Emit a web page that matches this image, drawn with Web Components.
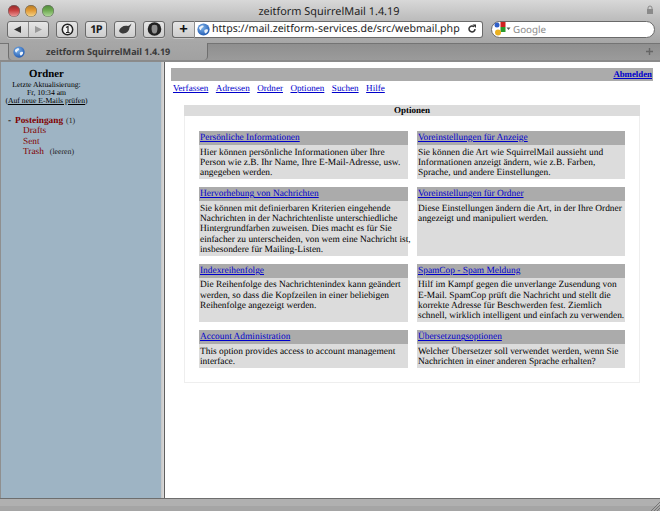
<!DOCTYPE html>
<html lang="de"><head><meta charset="utf-8"><title>zeitform SquirrelMail 1.4.19</title>
<style>
html,body{margin:0;height:100%;overflow:hidden}
body{background:#fff;font-family:"Liberation Serif",serif;text-rendering:geometricPrecision}
</style></head><body>
<browser-window>
  <browser-titlebar slot="chrome"></browser-titlebar>
  <browser-toolbar slot="chrome"></browser-toolbar>
  <browser-tabs slot="chrome"></browser-tabs>
  <folder-pane slot="left"></folder-pane>
  <main-pane slot="right">
    <option-card title-text="Persönliche Informationen">Hier können persönliche Informationen über Ihre<br>Person wie z.B. Ihr Name, Ihre E-Mail-Adresse, usw.<br>angegeben werden.</option-card>
    <option-card title-text="Voreinstellungen für Anzeige">Sie können die Art wie SquirrelMail aussieht und<br>Informationen anzeigt ändern, wie z.B. Farben,<br>Sprache, und andere Einstellungen.</option-card>
    <option-card title-text="Hervorhebung von Nachrichten">Sie können mit definierbaren Kriterien eingehende<br>Nachrichten in der Nachrichtenliste unterschiedliche<br>Hintergrundfarben zuweisen. Dies macht es für Sie<br>einfacher zu unterscheiden, von wem eine Nachricht ist,<br>insbesondere für Mailing-Listen.</option-card>
    <option-card title-text="Voreinstellungen für Ordner">Diese Einstellungen ändern die Art, in der Ihre Ordner<br>angezeigt und manipuliert werden.</option-card>
    <option-card title-text="Indexreihenfolge">Die Reihenfolge des Nachrichtenindex kann geändert<br>werden, so dass die Kopfzeilen in einer beliebigen<br>Reihenfolge angezeigt werden.</option-card>
    <option-card title-text="SpamCop - Spam Meldung">Hilf im Kampf gegen die unverlange Zusendung von<br>E-Mail. SpamCop prüft die Nachricht und stellt die<br>korrekte Adresse für Beschwerden fest. Ziemlich<br>schnell, wirklich intelligent und einfach zu verwenden.</option-card>
    <option-card title-text="Account Administration">This option provides access to account management<br>interface.</option-card>
    <option-card title-text="Übersetzungsoptionen">Welcher Übersetzer soll verwendet werden, wenn Sie<br>Nachrichten in einer anderen Sprache erhalten?</option-card>
  </main-pane>
</browser-window>
<script>
function def(name, html){
  customElements.define(name, class extends HTMLElement{
    connectedCallback(){
      if(this.shadowRoot) return;
      const r=this.attachShadow({mode:'open'});
      r.innerHTML = typeof html==='function' ? html(this) : html;
    }
  });
}
const GLOBE=(s,id)=>`<svg width="${s}" height="${s}" viewBox="0 0 16 16"><defs><radialGradient id="${id}" cx=".4" cy=".35" r=".75"><stop offset="0" stop-color="#7fb4ea"/><stop offset="1" stop-color="#1650ac"/></radialGradient></defs><circle cx="8" cy="8" r="7.500" fill="url(#${id})"/><path d="M3 5c2-2 4-2.500 5-1.500s-1 2-2 3-1 3-2 2-2-2-1-3.500zM10.500 8c2-1 3 0 3 1s-1 3-3 4c-1-1-1.500-2-1.500-3s.5-2 1.500-2z" fill="#eef4fb"/></svg>`;

def('browser-window',`<style>
:host{display:flex;flex-direction:column;width:660px;height:511px;overflow:hidden;font-family:"Liberation Serif",serif}
.split{flex:1;min-height:0;display:flex;border-top:1px solid #8b8b8b}
.left{width:161px;flex:none;background:#9eb4c4;border-left:1px solid #8f8f8f;box-sizing:border-box}
.div{width:4px;flex:none;background:linear-gradient(90deg,#c4c4c4,#dadada 75%,#5f5f5f 75%,#5f5f5f)}
.right{flex:1;min-width:0;background:#fff}
.status{height:13px;flex:none;border-top:1px solid #6e6e6e;box-sizing:border-box;background:linear-gradient(#b0b0b0 0 55%,#a5a5a5 55%);display:flex;justify-content:flex-end;align-items:flex-end}
svg{display:block}
</style>
<slot name="chrome"></slot>
<div class="split"><div class="left"><slot name="left"></slot></div><div class="div"></div><div class="right"><slot name="right"></slot></div></div>
<div class="status"><svg width="10" height="10" viewBox="0 0 10 10"><path d="M1 10L10 1M4 10L10 4M7 10L10 7" stroke="#666" stroke-width=".8"/></svg></div>`);

def('browser-titlebar',`<style>
:host{display:flex;align-items:center;height:20px;padding:0 7px 0 8px;box-sizing:border-box;background:linear-gradient(#d8d8d8,#bcbcbc);color:#222}
.lights{display:flex;gap:5px;padding-top:2px}
.l{width:12px;height:12px;border-radius:50%;box-sizing:border-box;box-shadow:inset 0 0 0 .5px #666}
.r{background:linear-gradient(#8f2b2b,#c83f3f 45%,#eea0a0)}
.y{background:linear-gradient(#b27a25,#e29a35 45%,#f5d890)}
.g{background:linear-gradient(#4f8a3b,#6fab52 45%,#b5dca0)}
.t{flex:1;text-align:center;margin-left:-42px;font:10.900px "Noto Sans",sans-serif;color:#1e1e1e;padding-top:2px}
svg{display:block;margin-right:-1px}
</style>
<div class="lights"><div class="l r"></div><div class="l y"></div><div class="l g"></div></div>
<div class="t">zeitform SquirrelMail 1.4.19</div>
<svg width="8" height="10" viewBox="0 0 8 10"><path d="M2 4V3a2 2 0 0 1 4 0v1" fill="none" stroke="#8a8a8a"/><rect x="1" y="4" width="6" height="5" fill="#8a8a8a"/></svg>`);

def('tool-btn',`<style>
:host{display:flex;align-items:center;justify-content:center;height:17px;box-sizing:border-box;border:1px solid #6a6a6a;border-radius:3px;background:linear-gradient(#e6e6e6,#cdcdcd);box-shadow:0 1px 0 #c6c6c6}
</style><slot></slot>`);

def('browser-toolbar',`<style>
:host{display:flex;align-items:center;height:23px;padding:0 0 5px 7px;box-sizing:border-box;background:linear-gradient(#bcbcbc,#a6a6a6);font-family:"Noto Sans",sans-serif}
svg{display:block}
tool-btn{flex:none}
.nav{width:42px;display:flex}
.nav span{flex:1;display:flex;align-items:center;justify-content:center;height:15px}
.nav span+span{border-left:1px solid #8a8a8a}
.w22{width:22px;margin-left:7px}
.plus{width:22px;margin-left:7px;border-radius:3px 0 0 3px;border-right:0;font:bold 15px "Noto Sans",sans-serif;color:#111;line-height:1}
.url{flex:none;width:289px;height:17px;box-sizing:border-box;background:#fff;border:1px solid #6a6a6a;border-left:1px solid #8f8f8f;border-radius:0 3px 3px 0;display:flex;align-items:center;padding:0 5px 0 2px;gap:2px;font-size:10.600px;color:#222;white-space:nowrap}
.url .u{flex:1}
.search{flex:none;width:164px;height:17px;margin-left:8px;box-sizing:border-box;background:#fff;border:1px solid #6a6a6a;border-radius:9px;display:flex;align-items:center;padding-left:2px;gap:1px;font-size:9.800px;color:#8a8a8a}
.txt{font:bold 11px "Noto Sans",sans-serif;color:#1a1a1a;letter-spacing:-.7px}
</style>
<tool-btn class="nav"><span><svg width="9" height="9" viewBox="0 0 9 9"><path d="M8 1v7L1 4.500z" fill="#333"/></svg></span><span><svg width="9" height="9" viewBox="0 0 9 9"><path d="M1 1v7l7-3.500z" fill="#9a9a9a"/></svg></span></tool-btn>
<tool-btn class="w22"><svg width="13" height="13" viewBox="0 0 13 13"><circle cx="6.500" cy="6.500" r="5.200" fill="#f4f4f4" stroke="#222" stroke-width="1.500"/><path d="M5 4.500l2-1v6M5 9.500h3.600" fill="none" stroke="#222" stroke-width="1.200"/></svg></tool-btn>
<tool-btn class="w22"><span class="txt">1P</span></tool-btn>
<tool-btn class="w22"><svg width="15" height="12" viewBox="0 0 15 12"><path d="M1 8C2 4 6 2 10 3c1 0 2-1 3.500-2.500-.5 2-1.500 3-2 4 0 3-3 6-6 6-1.500 0-3.500-.5-4.500-2.500z" fill="#3b3b3b"/></svg></tool-btn>
<tool-btn class="w22"><svg width="15" height="14" viewBox="0 0 15 14"><circle cx="7.500" cy="7" r="6.800" fill="#222"/><path d="M5 3.500c1.500-1 3.500-1 5 0 .6 2 .6 4 0 6-.5 1.500-1 2-2.500 2s-2-.5-2.500-2c-.6-2-.6-4 0-6z" fill="#8f8f8f"/></svg></tool-btn>
<tool-btn class="plus">+</tool-btn>
<div class="url">${GLOBE(13,'g1')}<span class="u">https://mail.zeitform-services.de/src/webmail.php</span><svg width="10" height="10" viewBox="0 0 10 10"><path d="M8 5a3 3 0 1 1-1-2.300" fill="none" stroke="#333" stroke-width="1.500"/><path d="M5.500 0.500h3.500v3.500z" fill="#333"/></svg></div>
<div class="search"><svg width="18" height="14" viewBox="0 0 18 14"><circle cx="3" cy="3" r="2.500" fill="#2f5fc8"/><rect x="6.500" y="0" width="5" height="5" fill="#d02020"/><rect x="6.500" y="5" width="5" height="5" fill="#2a9a2a"/><circle cx="4" cy="10.500" r="3" fill="#eab020"/><path d="M12.500 5.500h4l-2 2.500z" fill="#555"/></svg><span>Google</span></div>`);

def('browser-tabs',`<style>
:host{display:flex;height:18px;box-sizing:border-box;background:linear-gradient(#8e8e8e,#9b9b9b);box-shadow:inset 0 1px 0 #747474;border-bottom:1px solid #8a8a8a;align-items:stretch;font:bold 9.100px "Noto Sans",sans-serif;color:#3a3a3a}
.stub{width:8px;background:#aeaeae;box-shadow:inset 0 1px 0 #747474}
.tab{width:200px;box-sizing:border-box;background:linear-gradient(#a7a7a7,#a1a1a1);border:solid #6f6f6f;border-width:0 1px 0 1px;border-radius:0 0 4px 4px;display:flex;align-items:center;padding-left:4px;gap:21px;white-space:nowrap}
.add{margin-left:auto;padding-right:7px;display:flex;align-items:center}
svg{display:block}
</style>
<div class="stub"></div>
<div class="tab">${GLOBE(12,'g2')}<span>zeitform SquirrelMail 1.4.19</span></div>
<div class="add"><svg width="7" height="7" viewBox="0 0 7 7"><path d="M3.500 0v7M0 3.500h7" stroke="#666" stroke-width="1.400"/></svg></div>`);

def('folder-pane',`<style>
:host{display:block;color:#000;font-family:"Liberation Serif",serif;padding-top:6px}
.head{width:91px;text-align:center;font-size:7.700px;line-height:8px}
.head b{display:block;font-size:10.800px;line-height:12px;margin-bottom:1px}
a{color:#000;text-decoration:underline}
ul{list-style:none;margin:11px 0 0;padding:0 0 0 7px;font-size:9.300px;line-height:10.400px;color:#800000}
li{display:flex;align-items:baseline}
.dash{width:7px;color:#000;font-weight:bold}
.sub{padding-left:15px}
.note{font-size:7.800px;color:#222;margin-left:3px}
</style>
<div class="head"><b>Ordner</b>Letzte Aktualisierung:<br>Fr, 10:34 am<br>(<a>Auf neue E-Mails prüfen</a>)</div>
<ul>
<li><span class="dash">-</span><b>Posteingang</b><span class="note">(1)</span></li>
<li class="sub">Drafts</li>
<li class="sub">Sent</li>
<li class="sub">Trash<span class="note" style="margin-left:6px">(leeren)</span></li>
</ul>`);

def('main-pane',`<style>
:host{display:block;padding:6px 7px 0 6px;font-family:"Liberation Serif",serif;font-size:9.400px;color:#000}
a{color:#0000cc;text-decoration:underline}
.top{height:13px;background:#ababab;text-align:right;font-weight:bold;padding-right:1px;line-height:13px;font-size:8.800px}
.links{display:flex;gap:7.500px;padding:1px 0 0 2px;line-height:12px;font-size:9.100px}
.box{margin:11px 13px 0 13px;border:1px solid #eee;padding-bottom:14px}
.title{height:11px;line-height:11px;background:#dcdcdc;text-align:center;font-weight:bold;font-size:9px;margin:-1px -1px 0}
.grid{display:grid;grid-template-columns:209px 208px;column-gap:9px;row-gap:8.300px;padding:15px 0 0 14px}
</style>
<div class="top"><a>Abmelden</a></div>
<div class="links"><a>Verfassen</a><a>Adressen</a><a>Ordner</a><a>Optionen</a><a>Suchen</a><a>Hilfe</a></div>
<div class="box"><div class="title">Optionen</div><div class="grid"><slot></slot></div></div>`);

def('option-card',el=>`<style>
:host{display:flex;flex-direction:column;background:#dcdcdc;font-size:9.400px;line-height:10.300px;white-space:nowrap;min-width:0}
.h{height:14px;line-height:15px;background:#ababab;padding-left:1px}
.b{padding:2.500px 1px 0.500px 1px}
a{color:#0000cc;text-decoration:underline}
</style><div class="h"><a>${el.getAttribute('title-text')}</a></div><div class="b"><slot></slot></div>`);
</script>
</body></html>
